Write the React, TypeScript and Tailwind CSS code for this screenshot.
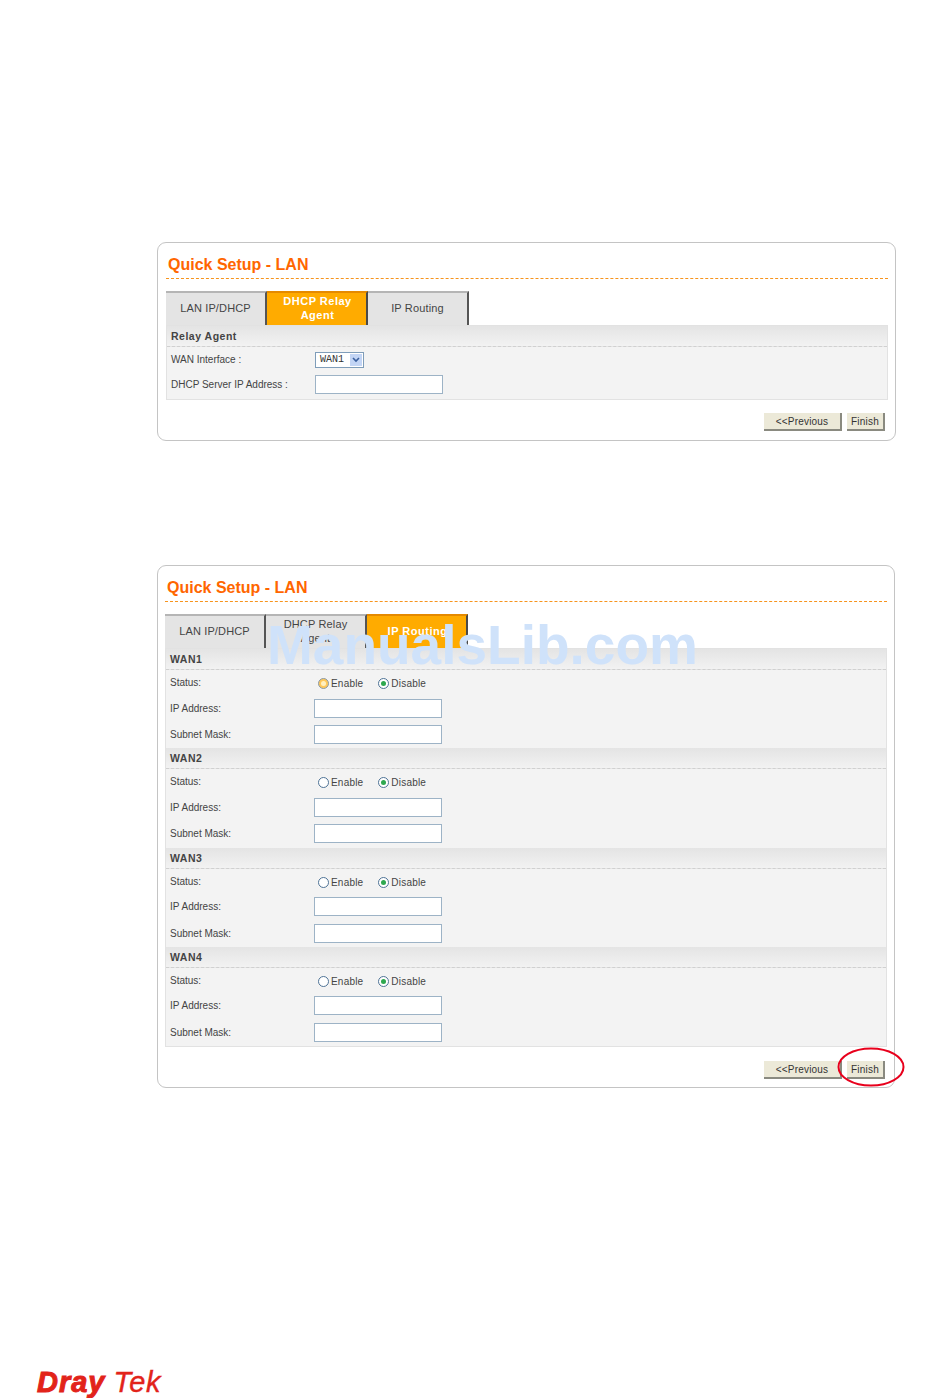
import React from "react";

const sans = "font-['Liberation_Sans',Arial,sans-serif]";

function Tabs({ active }: { active: number }) {
  const labels = ["LAN IP/DHCP", "DHCP Relay\nAgent", "IP Routing"];
  return (
    <div className="flex h-[34px] w-[303px]">
      {labels.map((label, i) => (
        <div
          key={label}
          className={
            i === active
              ? "flex w-[101px] items-center justify-center border-t-2 border-r-2 border-t-[#e58a00] border-r-[#4a4a4a] bg-[#ffab00] pb-[2px] pl-[2px] text-center text-[11px] leading-[14px] font-bold tracking-[0.5px] whitespace-pre-line text-white"
              : "flex w-[101px] items-center justify-center border-t-2 border-r-2 border-t-[#b5b5b5] border-r-[#555555] bg-[#e4e4e4] pb-[2px] text-center text-[11px] leading-[14px] tracking-[0.15px] whitespace-pre-line text-[#444444]"
          }
        >
          {label}
        </div>
      ))}
    </div>
  );
}

function SectionHeader({ title }: { title: string }) {
  return (
    <div className="flex h-[21px] items-center border-b border-dashed border-b-[#d0d0d0] bg-gradient-to-b from-[#e4e4e4] to-[#f2f2f2] pt-[2px] pl-1 text-[10.5px] font-bold tracking-[0.5px] text-[#444444]">
      {title}
    </div>
  );
}

function TextBox() {
  return <div className="h-[19px] w-[128px] border border-[#9db3c6] bg-white" />;
}

function Label({ children }: { children: React.ReactNode }) {
  return <div className="w-[148px] pl-1 text-[10px] text-[#444444]">{children}</div>;
}

function Radio({ checked, hover, label }: { checked?: boolean; hover?: boolean; label: string }) {
  return (
    <div className="flex items-center gap-[2px] text-[10px] tracking-[0.2px] text-[#444444]">
      <span
        className={
          hover
            ? "flex h-[11px] w-[11px] items-center justify-center rounded-full border border-[#8a9aa8] bg-[#ffc85a]"
            : "flex h-[11px] w-[11px] items-center justify-center rounded-full border border-[#4f7396] bg-white"
        }
      >
        {hover && <span className="h-[5px] w-[5px] rounded-full bg-[#fff0c0]" />}
        {checked && <span className="h-[5px] w-[5px] rounded-full bg-[#2fa84f]" />}
      </span>
      {label}
    </div>
  );
}

function WanSection({ name, hover }: { name: string; hover?: boolean }) {
  return (
    <div className="h-[99.33px]">
      <SectionHeader title={name} />
      <div className="flex h-[25px] items-center">
        <Label>Status:</Label>
        <div className="ml-[4px] flex gap-[15px] pt-[2px]">
          <Radio hover={hover} label="Enable" />
          <Radio checked label="Disable" />
        </div>
      </div>
      <div className="flex h-[26px] items-center">
        <Label>IP Address:</Label>
        <TextBox />
      </div>
      <div className="flex h-[27px] items-center">
        <Label>Subnet Mask:</Label>
        <TextBox />
      </div>
    </div>
  );
}

function Footer({ className }: { className: string }) {
  return (
    <div className={"flex justify-end gap-[5px] " + className}>
      <div className="flex h-[18px] w-[78px] items-center justify-center border-r-2 border-b-2 border-r-[#8a8a80] border-b-[#8a8a80] bg-[#ece9d8] text-[10px] tracking-[0.2px] text-[#333333]">
        &lt;&lt;Previous
      </div>
      <div className="flex h-[18px] w-[38px] items-center justify-center border-r-2 border-b-2 border-r-[#8a8a80] border-b-[#8a8a80] bg-[#ece9d8] text-[10px] tracking-[0.2px] text-[#333333]">
        Finish
      </div>
    </div>
  );
}

function Card({ className, children }: { className: string; children: React.ReactNode }) {
  return (
    <div className={"rounded-[9px] border border-[#c4c4c4] bg-white " + className}>
      <div className="flex h-[36px] items-end border-b border-dashed border-b-[#f7941d] pb-[3px] pl-[2px] text-[16px] leading-[20px] font-bold text-[#ff6600]">
        Quick Setup - LAN
      </div>
      {children}
    </div>
  );
}

export default function App() {
  return (
    <div className={"relative h-[1398px] w-[950px] overflow-hidden bg-white pt-[242px] pl-[157px] " + sans}>
      <Card className="h-[199px] w-[739px] pr-[7px] pl-[8px]">
        <div className="mt-[12px]">
          <Tabs active={1} />
        </div>
        <div className="h-[75px] border border-[#e2e2e2] bg-[#f3f3f3]">
          <SectionHeader title="Relay Agent" />
          <div className="flex h-[25px] items-center">
            <Label>WAN Interface :</Label>
            <div className="flex h-[16px] w-[49px] items-center justify-between border border-[#7f9db9] bg-white p-[1px] pl-1 font-['Liberation_Mono',monospace] text-[10px] text-[#333333]">
              WAN1
              <span className="flex h-full w-[12px] items-center justify-center bg-[#c3d5f5]">
                <svg width="8" height="6" viewBox="0 0 8 6">
                  <path d="M1 1l3 3 3-3" fill="none" stroke="#3a5f9e" strokeWidth="1.6" />
                </svg>
              </span>
            </div>
          </div>
          <div className="flex h-[25px] items-center">
            <Label>DHCP Server IP Address :</Label>
            <TextBox />
          </div>
        </div>
        <Footer className="mt-[13px] mr-[3px]" />
      </Card>

      <Card className="mt-[124px] h-[523px] w-[738px] pr-[7px] pl-[7px]">
        <div className="mt-[12px]">
          <Tabs active={2} />
        </div>
        <div className="h-[399px] border border-[#e2e2e2] bg-[#f3f3f3]">
          <WanSection name="WAN1" hover />
          <WanSection name="WAN2" />
          <WanSection name="WAN3" />
          <WanSection name="WAN4" />
        </div>
        <Footer className="mt-[14px] mr-[2px]" />
      </Card>

      {/* red circle drawn over the Finish button */}
      <svg className="absolute top-[1046px] left-[836px]" width="70" height="42" viewBox="0 0 70 42">
        <ellipse cx="35" cy="21" rx="32.5" ry="18.5" fill="none" stroke="#e8001c" strokeWidth="2" />
      </svg>

      {/* watermark */}
      <div className="absolute top-[615px] left-[267px] text-[55px] leading-[61px] font-bold whitespace-nowrap text-[#cfe2fa]">
        ManualsLib.com
      </div>

      {/* logo */}
      <div className="absolute top-[1364px] left-[37px] flex items-baseline text-[#e2231a] italic">
        <span className="text-[29px] leading-[36px] font-bold tracking-[1px] [-webkit-text-stroke:1px_#e2231a]">Dray</span>
        <span className="ml-[8px] text-[29px] leading-[36px] tracking-[0.7px] [-webkit-text-stroke:0.4px_#e2231a]">Tek</span>
      </div>
    </div>
  );
}
